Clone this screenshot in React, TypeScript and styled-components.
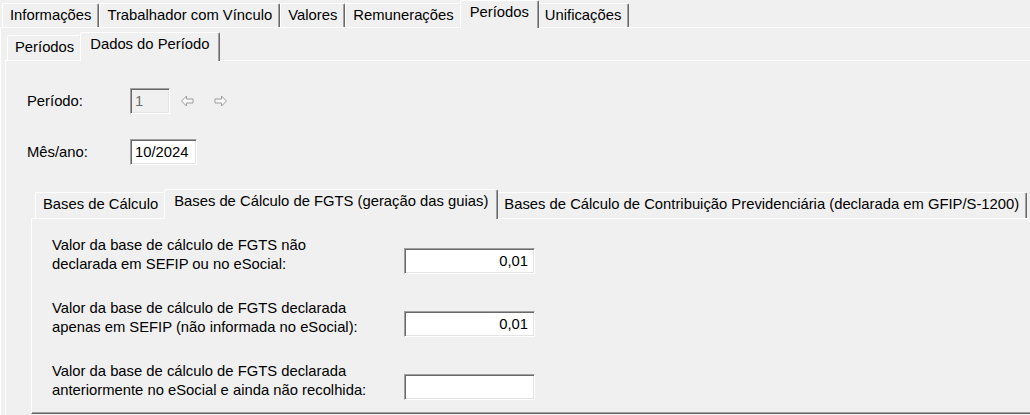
import React from "react";
import styled, { createGlobalStyle, css } from "styled-components";

const GlobalStyle = createGlobalStyle`
  html, body {
    margin: 0;
    padding: 0;
    background: #f0f0f0;
  }
  body {
    font-family: "Liberation Sans", Arial, sans-serif;
    font-size: 14.8px;
    color: #000;
  }
`;

const Page = styled.div`
  width: 1030px;
  height: 415px;
  overflow: hidden;
  background: #f0f0f0;
  line-height: 19px;
`;

const TabStrip = styled.div<{ $height: number; $indent: number; $offset?: number }>`
  display: flex;
  align-items: flex-end;
  position: relative;
  z-index: 1;
  height: ${(p) => p.$height}px;
  padding-left: ${(p) => p.$indent}px;
  margin-top: ${(p) => p.$offset ?? 0}px;
  white-space: nowrap;
`;

const Tab = styled.div<{ $active?: boolean }>`
  box-sizing: border-box;
  flex: none;
  height: calc(100% - 3px);
  padding: 2px 7px 0;
  background: #f0f0f0;
  border-top: 1px solid #fff;
  border-left: 1px solid #fff;
  border-right: 1px solid #696969;
  border-radius: 2px 2px 0 0;
  box-shadow: inset -1px 0 #a0a0a0;
  ${(p) =>
    p.$active &&
    css`
      position: relative;
      z-index: 2;
      height: calc(100% + 1px);
      margin: 0 -2px -1px;
      padding: 2px 9px 0;
    `}
`;

const Panel = styled.div`
  box-sizing: border-box;
  border-top: 1px solid #fff;
  border-left: 1px solid #fff;
  border-right: 1px solid #696969;
  border-bottom: 1px solid #696969;
  box-shadow: inset -1px -1px #a0a0a0;
`;

const PagePanel = styled(Panel)`
  width: 1100px;
  min-height: 460px;
  padding-left: 4px;
`;

const PeriodPanel = styled(Panel)`
  width: 1080px;
  padding: 27px 0 24px 21px;
`;

const BasesPanel = styled(Panel)`
  width: 1040px;
  margin-left: 4px;
  padding: 17px 0 13px 20px;
`;

const FieldRow = styled.div<{ $gap?: number }>`
  display: flex;
  align-items: center;
  height: 26px;
  margin-bottom: ${(p) => p.$gap ?? 0}px;
`;

const FieldLabel = styled.div`
  width: 103px;
  flex: none;
`;

const TextBox = styled.div<{ $width: number; $align?: "left" | "right"; $disabled?: boolean }>`
  box-sizing: border-box;
  flex: none;
  width: ${(p) => p.$width}px;
  height: 26px;
  line-height: 24px;
  padding: 0 6px 0 4px;
  text-align: ${(p) => p.$align ?? "left"};
  background: ${(p) => (p.$disabled ? "#f0f0f0" : "#fff")};
  color: ${(p) => (p.$disabled ? "#6d6d6d" : "#000")};
  border: 1px solid;
  border-color: #a0a0a0 #fff #fff #a0a0a0;
  box-shadow: inset 1px 1px #696969, inset -1px -1px #e3e3e3;
`;

const NavArrow = styled.svg<{ $gap: number }>`
  flex: none;
  margin-left: ${(p) => p.$gap}px;
  width: 13px;
  height: 12px;
`;

const ValueRow = styled.div<{ $last?: boolean }>`
  display: flex;
  align-items: flex-end;
  margin-bottom: ${(p) => (p.$last ? 0 : 25)}px;
`;

const ValueLabel = styled.div`
  width: 352px;
  flex: none;
`;

const mainTabs = ["Informações", "Trabalhador com Vínculo", "Valores", "Remunerações", "Períodos", "Unificações"];
const periodTabs = ["Períodos", "Dados do Período"];
const basesTabs = [
  "Bases de Cálculo",
  "Bases de Cálculo de FGTS (geração das guias)",
  "Bases de Cálculo de Contribuição Previdenciária (declarada em GFIP/S-1200)",
];

const values = [
  { lines: ["Valor da base de cálculo de FGTS não", "declarada em SEFIP ou no eSocial:"], value: "0,01" },
  { lines: ["Valor da base de cálculo de FGTS declarada", "apenas em SEFIP (não informada no eSocial):"], value: "0,01" },
  { lines: ["Valor da base de cálculo de FGTS declarada", "anteriormente no eSocial e ainda não recolhida:"], value: "" },
];

const Arrow = ({ dir, gap }: { dir: "left" | "right"; gap: number }) => (
  <NavArrow $gap={gap} viewBox="0 0 13 12">
    <path
      d="M0.5 6 L5.5 1 L5.5 4 L12 4 L12 8 L5.5 8 L5.5 11 Z"
      fill="#f7f7f7"
      stroke="#9c9c9c"
      strokeWidth="1"
      strokeLinejoin="miter"
      transform={dir === "right" ? "translate(13 0) scale(-1 1)" : undefined}
    />
  </NavArrow>
);

const Tabs = ({ items, active }: { items: string[]; active: number }) => (
  <>
    {items.map((t, i) => (
      <Tab key={t} $active={i === active}>
        {t}
      </Tab>
    ))}
  </>
);

export default function App() {
  return (
    <Page>
      <GlobalStyle />
      <TabStrip $height={27} $indent={2}>
        <Tabs items={mainTabs} active={4} />
      </TabStrip>
      <PagePanel>
        <TabStrip $height={28} $indent={2} $offset={4}>
          <Tabs items={periodTabs} active={1} />
        </TabStrip>
        <PeriodPanel>
          <FieldRow $gap={25}>
            <FieldLabel>Período:</FieldLabel>
            <TextBox $width={40} $disabled>
              1
            </TextBox>
            <Arrow dir="left" gap={11} />
            <Arrow dir="right" gap={20} />
          </FieldRow>
          <FieldRow>
            <FieldLabel>Mês/ano:</FieldLabel>
            <TextBox $width={67}>10/2024</TextBox>
          </FieldRow>
          <TabStrip $height={29} $indent={8} $offset={24}>
            <Tabs items={basesTabs} active={1} />
          </TabStrip>
          <BasesPanel>
            {values.map((v, i) => (
              <ValueRow key={i} $last={i === values.length - 1}>
                <ValueLabel>
                  {v.lines[0]}
                  <br />
                  {v.lines[1]}
                </ValueLabel>
                <TextBox $width={131} $align="right">
                  {v.value}
                </TextBox>
              </ValueRow>
            ))}
          </BasesPanel>
        </PeriodPanel>
      </PagePanel>
    </Page>
  );
}
